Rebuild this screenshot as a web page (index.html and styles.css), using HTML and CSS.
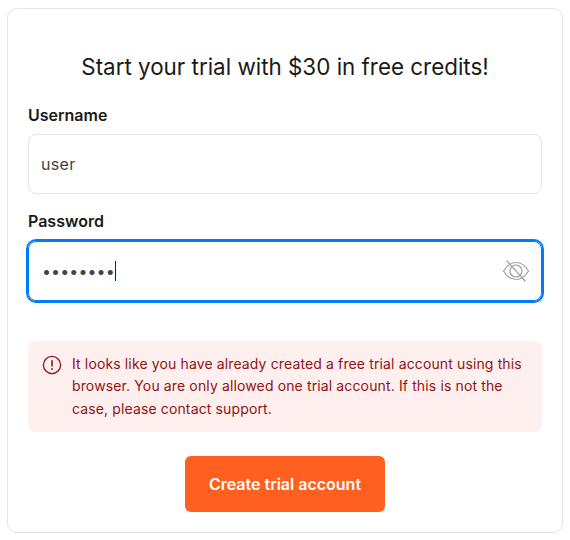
FILE: index.html
```html
<!DOCTYPE html>
<html lang="en">
<head>
  <meta charset="UTF-8">
  <title>Start your trial</title>
  <link rel="stylesheet" href="styles.css">
</head>
<body>
<div class="card">
  <h1 class="title">Start your trial with $30 in free credits!</h1>

  <div class="field">
    <div class="label">Username</div>
    <div class="input">user</div>
  </div>

  <div class="field">
    <div class="label">Password</div>
    <div class="input input-focus">
      <span class="dots">••••••••</span><span class="caret"></span>
      <svg class="eye" width="28" height="28" viewBox="0 0 28 28" fill="none" stroke="#a0a0a0" stroke-width="1.2">
        <path d="M1.5 14C5 8 9.5 5.5 14 5.5s9 2.5 12.5 8.5c-3.5 6-8 8.5-12.5 8.5s-9-2.500-12.500-8.500z"/>
        <circle cx="14" cy="14" r="6"/>
        <path d="M4.5 3.5l19 21"/>
      </svg>
    </div>
  </div>

  <div class="alert">
    <svg class="alert-icon" width="20" height="20" viewBox="0 0 20 20" fill="none" stroke="#8f1414" stroke-width="1.3">
      <circle cx="10" cy="10" r="8.6"/>
      <path d="M10 5.2v6.2" stroke-width="1.6"/>
      <path d="M10 13.2v1.7" stroke-width="1.6"/>
    </svg>
    <p>It looks like you have already created a free trial account using this browser. You are only allowed one trial account. If this is not the case, please contact support.</p>
  </div>

  <div class="actions">
    <button class="btn">Create trial account</button>
  </div>
</div>
</body>
</html>
```

FILE: styles.css
```css
* {
  margin: 0;
  padding: 0;
  box-sizing: border-box;
}

body {
  font-family: 'Inter', sans-serif;
  background: #fff;
  color: #1a1a1a;
  padding: 8px 7px 7px;
}

.card {
  width: 556px;
  height: 525px;
  border: 1px solid #e4e4e4;
  border-radius: 10px;
  padding: 40px 20px 20px;
  display: flex;
  flex-direction: column;
}

.title {
  font-size: 22.4px;
  font-weight: 400;
  line-height: 36px;
  text-align: center;
  margin-bottom: 18px;
}

.field {
  margin-bottom: 15px;
  flex-shrink: 0;
}

.label {
  font-size: 16px;
  font-weight: 600;
  line-height: 24px;
  margin-bottom: 7px;
}

.input {
  height: 60px;
  border: 1px solid #e6e3e3;
  border-radius: 8px;
  padding: 0 12px;
  display: flex;
  align-items: center;
  font-size: 16px;
  letter-spacing: 0.3px;
  color: #444;
}

.input-focus {
  margin-top: 8px;
  border-color: #007bff;
  box-shadow: 0 0 0 2px #007bff;
  padding-left: 13px;
  position: relative;
}

.dots {
  color: #444;
  font-size: 16px;
  letter-spacing: 0.1px;
}

.caret {
  width: 1px;
  height: 20px;
  background: #222;
}

.eye {
  position: absolute;
  right: 11px;
  top: 15px;
}

.alert {
  margin-top: 25px;
  background: #ffefef;
  border-radius: 8px;
  padding: 12px 14px;
  display: flex;
  gap: 10px;
  color: #8f1414;
  font-size: 14px;
  line-height: 22.4px;
  letter-spacing: 0.13px;
}

.alert-icon {
  flex-shrink: 0;
  margin-top: 2px;
}

.actions {
  margin-top: 24px;
  display: flex;
  justify-content: center;
}

.btn {
  width: 200px;
  height: 56px;
  background: #ff5f1f;
  color: #fff;
  border: none;
  border-radius: 6px;
  font-family: inherit;
  font-size: 16px;
  font-weight: 600;
}
```
